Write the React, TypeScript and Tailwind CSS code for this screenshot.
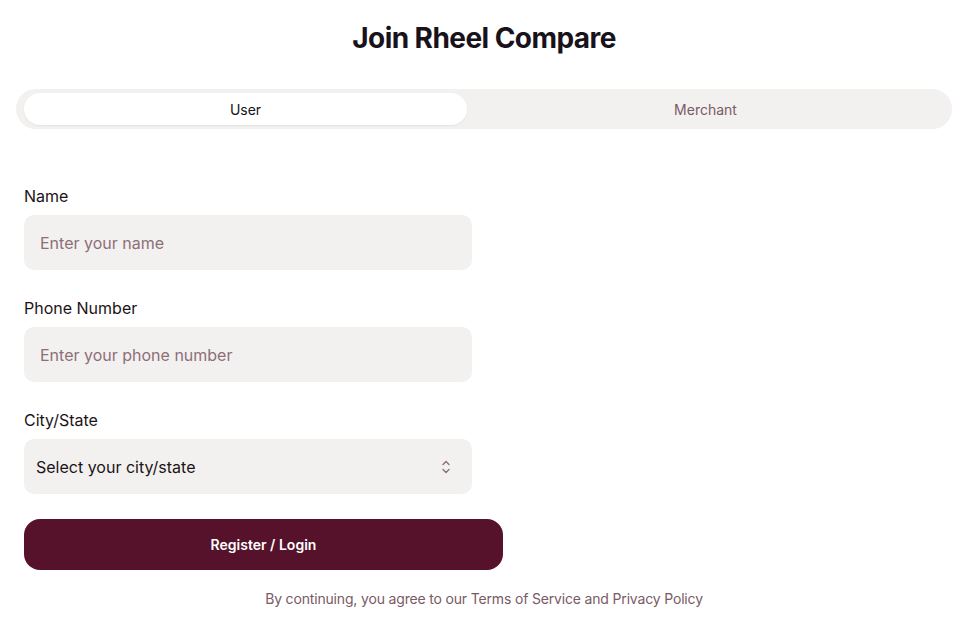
import { useState } from "react";

const Field = ({ label, placeholder }: { label: string; placeholder: string }) => (
  <div className="flex flex-col gap-[9px]">
    <label className="text-[16px] leading-[20px] font-normal text-[#1c1416]">{label}</label>
    <input
      placeholder={placeholder}
      className="h-[55px] w-[448px] rounded-[10px] bg-[#f3f1f0] px-4 text-[16px] text-[#1c1416] outline-none placeholder:text-[#8c6f78]"
    />
  </div>
);

export default function App() {
  const [tab, setTab] = useState<"user" | "merchant">("user");

  return (
    <div className="min-h-screen bg-white px-4 pt-[20px] font-['Inter',sans-serif]">
      <h1 className="text-center text-[28px] leading-[36px] font-bold tracking-[-0.02em] text-[#18121a]">
        Join Rheel Compare
      </h1>

      <div className="mt-[33px] flex h-[40px] items-center rounded-full bg-[#f3f1f0] py-1 pl-2 pr-2">
        <button
          onClick={() => setTab("user")}
          className={`h-[32px] w-[443px] rounded-full text-[14px] ${
            tab === "user" ? "bg-white text-[#18121a] shadow-[0_1px_2px_rgba(0,0,0,0.06)]" : "text-[#7a5a65]"
          }`}
        >
          User
        </button>
        <button
          onClick={() => setTab("merchant")}
          className={`h-[32px] flex-1 rounded-full text-[14px] ${
            tab === "merchant" ? "bg-white text-[#18121a]" : "text-[#7a5a65]"
          }`}
        >
          Merchant
        </button>
      </div>

      <form className="mt-[57px] flex flex-col px-2">
        <div className="flex flex-col gap-[28px]">
          <Field label="Name" placeholder="Enter your name" />
          <Field label="Phone Number" placeholder="Enter your phone number" />
          <div className="flex flex-col gap-[9px]">
            <label className="text-[16px] leading-[20px] font-normal text-[#1c1416]">City/State</label>
            <div className="flex h-[55px] w-[448px] items-center justify-between rounded-[10px] bg-[#f3f1f0] pl-3 pr-5">
              <span className="text-[16px] text-[#1c1416]">Select your city/state</span>
              <svg width="12" height="16" viewBox="0 0 12 16" fill="none" stroke="#8c6f78" strokeWidth="1.4" strokeLinecap="round" strokeLinejoin="round">
                <path d="M3 5.5 6 2.5 9 5.5" />
                <path d="M3 10.5 6 13.5 9 10.5" />
              </svg>
            </div>
          </div>
        </div>

        <button
          type="button"
          className="mt-[25px] h-[51px] w-[479px] rounded-[16px] bg-[#55122a] text-[14px] font-semibold text-white"
        >
          Register / Login
        </button>
      </form>

      <p className="mt-[18px] text-center text-[14px] tracking-[-0.012em] text-[#7a5a65]">
        By continuing, you agree to our Terms of Service and Privacy Policy
      </p>
    </div>
  );
}
